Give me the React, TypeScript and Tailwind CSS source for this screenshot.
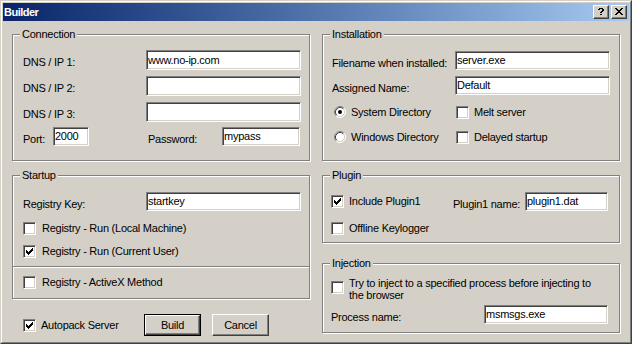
import React from 'react'

const CHECK = ['......#', '.....##', '#...###', '##.###.', '#####..', '.###...', '..#....']
const CLOSE = ['##....##', '.##..##.', '..####..', '...##...', '..####..', '.##..##.', '##....##']
const HELP = ['.####.', '##..##', '....##', '...##.', '..##..', '......', '..##..']

const Pixels = ({ rows }: { rows: string[] }) => (
  <svg width={rows[0].length} height={rows.length} shapeRendering="crispEdges">
    {rows.flatMap((r, y) =>
      r.split('').map((c, x) =>
        c === '#' ? <rect key={`${x}-${y}`} x={x} y={y} width="1" height="1" fill="#000" /> : null
      )
    )}
  </svg>
)

const CheckBox = ({ checked = false }: { checked?: boolean }) => (
  <span className="w-[13px] h-[13px] shrink-0 bg-white border border-[#808080] border-r-white border-b-white shadow-[inset_1px_1px_0_#404040,inset_-1px_-1px_0_#d4d0c8] flex items-center justify-center">
    {checked && <Pixels rows={CHECK} />}
  </span>
)

const Radio = ({ checked = false }: { checked?: boolean }) => (
  <svg width="12" height="12" viewBox="0 0 12 12" className="shrink-0">
    <circle cx="6" cy="6" r="5" fill="#fff" />
    <path d="M2.11 9.89A5.5 5.5 0 0 1 9.89 2.11" stroke="#808080" fill="none" />
    <path d="M9.89 2.11A5.5 5.5 0 0 1 2.11 9.89" stroke="#fff" fill="none" />
    <path d="M2.82 9.18A4.5 4.5 0 0 1 9.18 2.82" stroke="#404040" fill="none" />
    <path d="M9.18 2.82A4.5 4.5 0 0 1 2.82 9.18" stroke="#d4d0c8" fill="none" />
    {checked && <circle cx="6" cy="6" r="2" fill="#000" />}
  </svg>
)

const Field = ({ value = '', className = '' }: { value?: string; className?: string }) => (
  <div
    className={`bg-white border border-[#808080] border-r-white border-b-white shadow-[inset_1px_1px_0_#404040,inset_-1px_-1px_0_#d4d0c8] flex items-center pl-[1px] shrink-0 ${className}`}
  >
    {value}
  </div>
)

const Group = ({ title, className = '', children }: { title: string; className?: string; children?: React.ReactNode }) => (
  <div className={`relative border border-[#808080] shadow-[inset_1px_1px_0_#fff,1px_1px_0_#fff] ${className}`}>
    <span className="absolute -top-[7px] left-[7px] bg-[#d4d0c8] px-[2px] leading-[13px]">{title}</span>
    {children}
  </div>
)

const Option = ({ label, checked, className = '' }: { label: string; checked?: boolean; className?: string }) => (
  <div className={`flex items-center gap-[5px] h-[16px] ${className}`}>
    <CheckBox checked={checked} />
    <span>{label}</span>
  </div>
)

const CaptionButton = ({ rows }: { rows: string[] }) => (
  <div className="w-[16px] h-[14px] bg-[#d4d0c8] border border-white border-r-[#404040] border-b-[#404040] shadow-[inset_-1px_-1px_0_#808080] flex items-center justify-center pr-px pb-px">
    <Pixels rows={rows} />
  </div>
)

export default function App() {
  return (
    <div className="w-[632px] h-[344px] border border-[#d4d0c8] border-r-[#404040] border-b-[#404040] bg-[#d4d0c8] font-['Liberation_Sans',Arial,sans-serif] text-[11px] leading-[13px] tracking-[-0.25px] text-black">
      <div className="h-full border border-white border-r-[#808080] border-b-[#808080] p-px flex flex-col">
        {/* Title bar */}
        <div className="h-[18px] shrink-0 bg-linear-to-r from-[#0a246a] to-[#a6caf0] flex items-center justify-between pl-[1px] pr-[2px]">
          <span className="text-white font-bold tracking-[-0.5px]">Builder</span>
          <div className="flex gap-[2px]">
            <CaptionButton rows={HELP} />
            <CaptionButton rows={CLOSE} />
          </div>
        </div>

        {/* Client area */}
        <div className="flex-1 flex gap-[12px] pl-[9px] pt-[13px]">
          {/* Left column */}
          <div className="w-[298px] flex flex-col">
            <Group title="Connection" className="h-[127px] flex flex-col pt-[15px] pl-[10px]">
              <div className="flex items-center h-[20px]">
                <span className="w-[123px] pt-[5px]">DNS / IP 1:</span>
                <Field className="w-[155px] h-[20px]" value="www.no-ip.com" />
              </div>
              <div className="flex items-center h-[20px] mt-[6px]">
                <span className="w-[123px] pt-[5px]">DNS / IP 2:</span>
                <Field className="w-[155px] h-[20px]" />
              </div>
              <div className="flex items-center h-[20px] mt-[6px]">
                <span className="w-[123px] pt-[5px]">DNS / IP 3:</span>
                <Field className="w-[155px] h-[20px]" />
              </div>
              <div className="flex items-center h-[19px] mt-[5px]">
                <span className="w-[30px] pt-[5px]">Port:</span>
                <Field className="w-[36px] h-[19px]" value="2000" />
                <span className="w-[74px] ml-[59px] pt-[5px]">Password:</span>
                <Field className="w-[78px] h-[19px]" value="mypass" />
              </div>
            </Group>

            <Group title="Startup" className="h-[124px] mt-[14px] flex flex-col pt-[16px]">
              <div className="flex items-center h-[19px] pl-[10px]">
                <span className="w-[123px] pt-[5px]">Registry Key:</span>
                <Field className="w-[155px] h-[19px]" value="startkey" />
              </div>
              <Option className="mt-[9px] pl-[10px] gap-[6px]" label="Registry - Run (Local Machine)" />
              <Option className="mt-[7px] pl-[10px] gap-[6px]" label="Registry - Run (Current User)" checked />
              <div className="mt-[7px] h-[2px] border-t border-[#808080] border-b border-b-white" />
              <Option className="mt-[6px] pl-[10px] gap-[6px]" label="Registry - ActiveX Method" />
            </Group>

            <div className="flex items-center h-[22px] mt-[15px] pl-[11px]">
              <div className="w-[121px] flex items-center gap-[5px]">
                <CheckBox checked />
                <span>Autopack Server</span>
              </div>
              <button className="w-[57px] h-[22px] border border-black bg-[#d4d0c8] flex">
                <span className="flex-1 flex items-center justify-center border border-white border-r-[#404040] border-b-[#404040] shadow-[inset_-1px_-1px_0_#808080]">
                  Build
                </span>
              </button>
              <button className="w-[57px] h-[22px] ml-[11px] bg-[#d4d0c8] flex items-center justify-center border border-white border-r-[#404040] border-b-[#404040] shadow-[inset_-1px_-1px_0_#808080]">
                Cancel
              </button>
            </div>
          </div>

          {/* Right column */}
          <div className="w-[298px] flex flex-col">
            <Group title="Installation" className="h-[127px] flex flex-col pt-[16px]">
              <div className="flex items-center h-[19px] pl-[9px]">
                <span className="w-[123px] pt-[5px]">Filename when installed:</span>
                <Field className="w-[155px] h-[19px]" value="server.exe" />
              </div>
              <div className="flex items-center h-[19px] mt-[6px] pl-[9px]">
                <span className="w-[123px] pt-[5px]">Assigned Name:</span>
                <Field className="w-[155px] h-[19px]" value="Default" />
              </div>
              <div className="flex items-center h-[16px] mt-[9px] pl-[11px]">
                <div className="w-[122px] flex items-center gap-[5px]">
                  <Radio checked />
                  <span>System Directory</span>
                </div>
                <Option label="Melt server" className="gap-[4px]" />
              </div>
              <div className="flex items-center h-[16px] mt-[9px] pl-[11px]">
                <div className="w-[122px] flex items-center gap-[5px]">
                  <Radio />
                  <span>Windows Directory</span>
                </div>
                <Option label="Delayed startup" className="gap-[4px]" />
              </div>
            </Group>

            <Group title="Plugin" className="h-[68px] mt-[14px] flex flex-col pt-[16px] pl-[8px]">
              <div className="flex items-center h-[19px]">
                <Option label="Include Plugin1" checked className="w-[122px]" />
                <span className="w-[72px] pt-[5px]">Plugin1 name:</span>
                <Field className="w-[83px] h-[19px]" value="plugin1.dat" />
              </div>
              <Option className="mt-[9px]" label="Offline Keylogger" />
            </Group>

            <Group title="Injection" className="h-[70px] mt-[20px] flex flex-col pt-[13px] pl-[8px]">
              <div className="flex items-start gap-[5px]">
                <span className="mt-[4px]">
                  <CheckBox />
                </span>
                <span className="leading-[12px]">
                  Try to inject to a specified process before injecting to
                  <br />
                  the browser
                </span>
              </div>
              <div className="flex items-center h-[19px] mt-[4px]">
                <span className="w-[153px] pt-[5px]">Process name:</span>
                <Field className="w-[124px] h-[19px]" value="msmsgs.exe" />
              </div>
            </Group>
          </div>
        </div>
      </div>
    </div>
  )
}
